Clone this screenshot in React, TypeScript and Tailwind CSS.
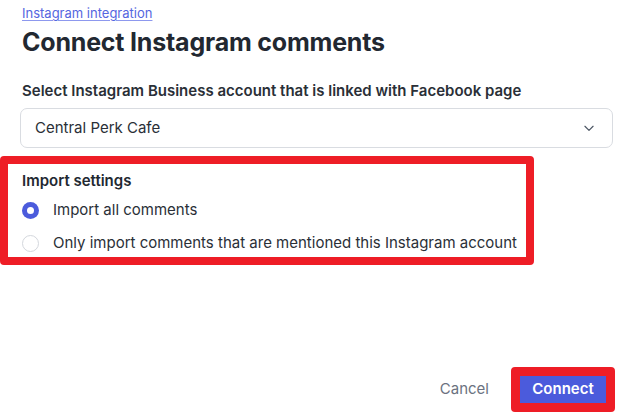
import React from "react";

function Radio({ checked }: { checked?: boolean }) {
  return checked ? (
    <span className="flex h-[17px] w-[17px] shrink-0 items-center justify-center rounded-full bg-[#4b5bdc]">
      <span className="h-[7px] w-[7px] rounded-full bg-white" />
    </span>
  ) : (
    <span className="h-[17px] w-[17px] shrink-0 rounded-full border border-[#d4d7dd] bg-white" />
  );
}

export default function App() {
  return (
    <div className="flex h-[418px] w-[635px] flex-col bg-white px-[22px] font-['Inter',sans-serif] text-[#222831]">
      <a className="mt-[5px] text-[13px] leading-[16px] text-[#5566e0] underline decoration-[#8d98ee] underline-offset-2">
        Instagram integration
      </a>
      <h1 className="mt-[6px] text-[25px] font-bold leading-[30px] tracking-[-0.2px]">
        Connect Instagram comments
      </h1>

      <label className="mt-[25px] text-[15px] font-semibold leading-[18px] tracking-[0px] text-[#2a2f37]">
        Select Instagram Business account that is linked with Facebook page
      </label>
      <div className="-ml-[2px] mt-[8px] flex h-[40px] w-[593px] items-center justify-between rounded-[7px] border border-[#d9dce1] pl-[14px] pr-[16px]">
        <span className="text-[15px] text-[#2a2f37]">Central Perk Cafe</span>
        <svg width="14" height="14" viewBox="0 0 24 24" fill="none" stroke="#4b5563" strokeWidth="2" strokeLinecap="round" strokeLinejoin="round">
          <path d="M5 9l7 7 7-7" />
        </svg>
      </div>

      <div className="-ml-[22px] mt-[8px] flex h-[109px] w-[534px] flex-col rounded-[4px] border-[8px] border-[#ee1d26] pl-[14px] pt-[8px]">
        <div className="text-[15px] font-semibold leading-[18px] text-[#222831]">Import settings</div>
        <div className="mt-[11px] flex items-center gap-[14px]">
          <Radio checked />
          <span className="text-[15px] leading-[18px] text-[#2a2f37]">Import all comments</span>
        </div>
        <div className="mt-[15px] flex items-center gap-[14px]">
          <Radio />
          <span className="text-[15px] leading-[18px] text-[#2a2f37]">
            Only import comments that are mentioned this Instagram account
          </span>
        </div>
      </div>

      <div className="-mr-[2px] mt-auto mb-[6px] flex items-center justify-end gap-[22px]">
        <button className="text-[15px] text-[#6b7280]">Cancel</button>
        <div className="rounded-[4px] border-[9px] border-[#ee1d26]">
          <button className="flex h-[27px] w-[86px] items-center justify-center bg-[#4b5bdc] text-[15px] font-semibold text-white">
            Connect
          </button>
        </div>
      </div>
    </div>
  );
}
